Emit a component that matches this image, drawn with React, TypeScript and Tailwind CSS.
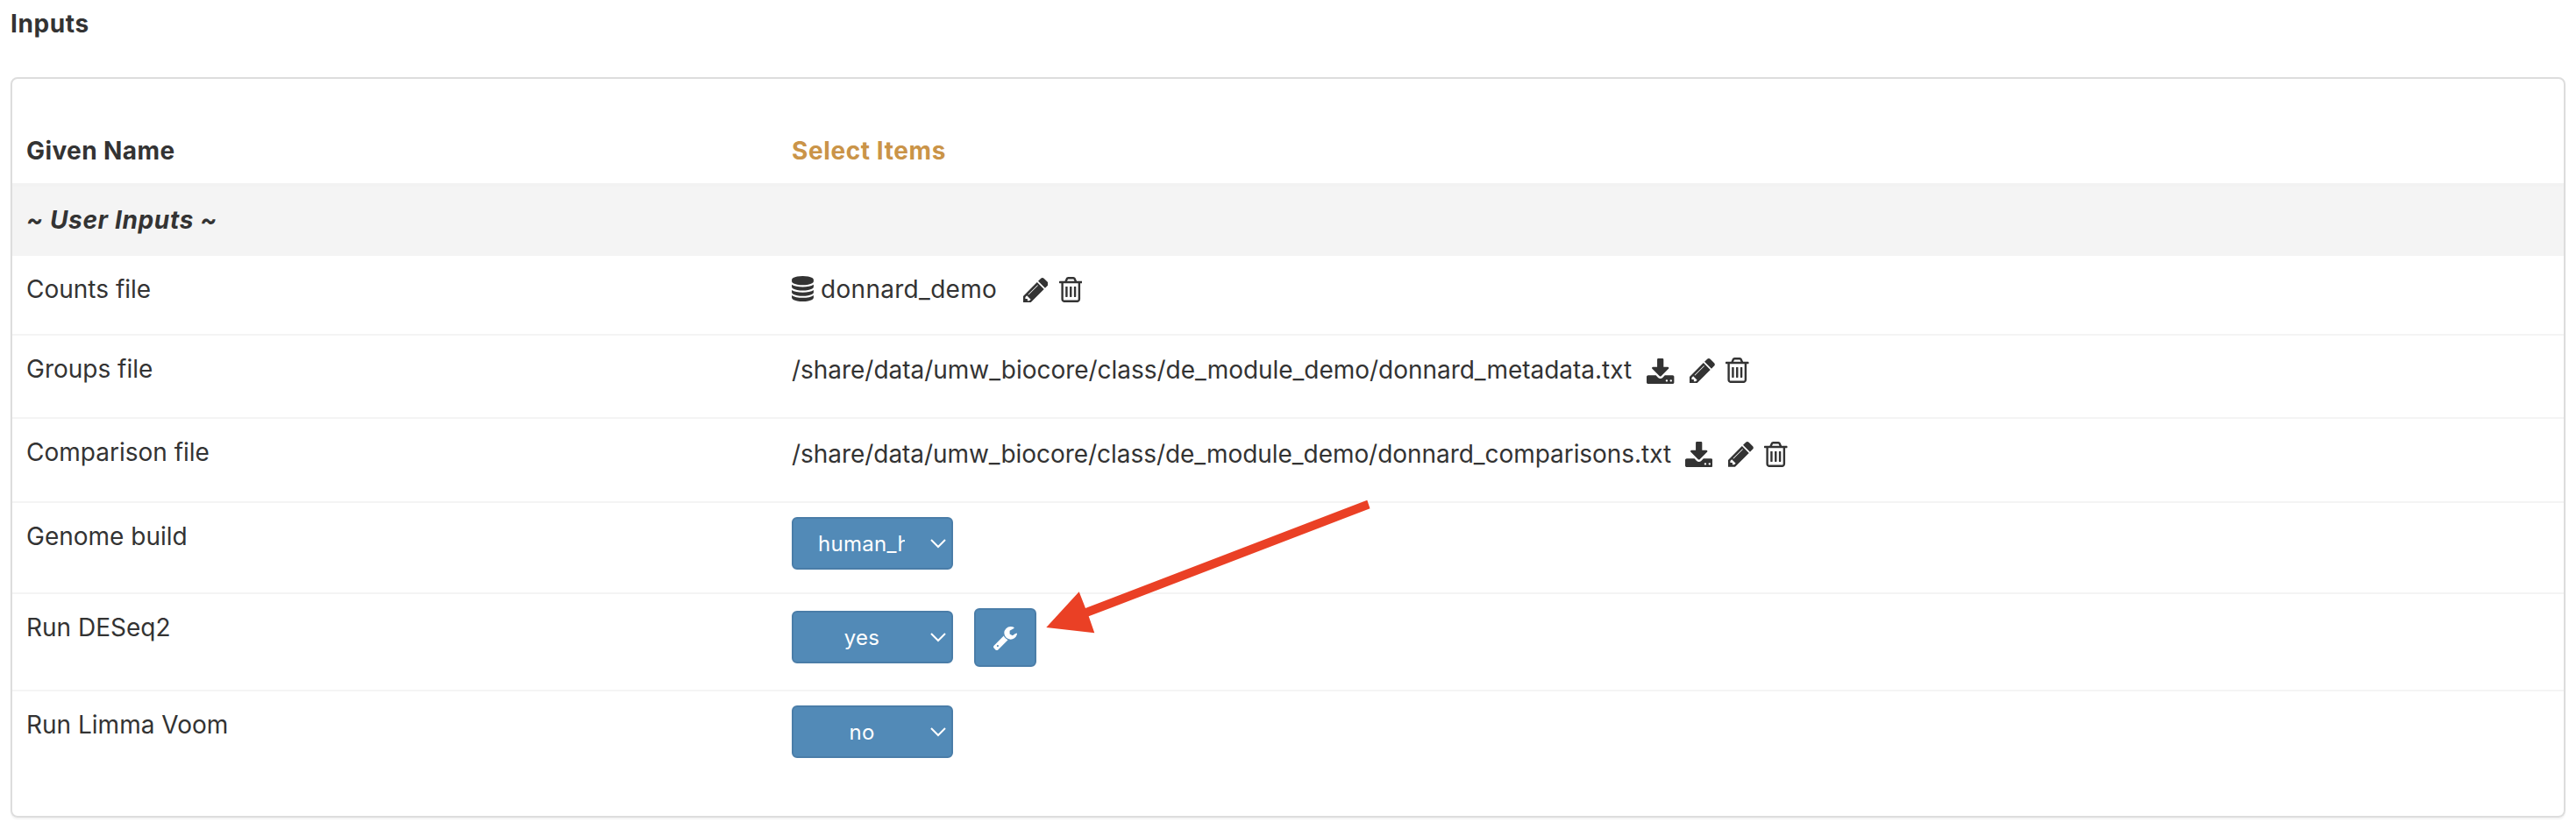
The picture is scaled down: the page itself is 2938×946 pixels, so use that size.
import type { ReactNode } from "react";

type GlyphProps = { className: string; viewBox: string; d: string };

function Glyph({ className, viewBox, d }: GlyphProps) {
  return (
    <svg className={`block shrink-0 fill-current ${className}`} viewBox={viewBox} aria-hidden="true">
      <path d={d} />
    </svg>
  );
}

const DatabaseIcon = () => (
  <Glyph
    className="mt-[5px] h-[29px] w-[25px]"
    viewBox="128 0 1536 1792"
    d="M896 768q237 0 443-43t325-127v170q0 69-103 128t-280 93.5-385 34.5-385-34.5-280-93.5-103-128v-170q119 84 325 127t443 43zm0 768q237 0 443-43t325-127v170q0 69-103 128t-280 93.5-385 34.5-385-34.5-280-93.5-103-128v-170q119 84 325 127t443 43zm0-384q237 0 443-43t325-127v170q0 69-103 128t-280 93.5-385 34.5-385-34.5-280-93.5-103-128v-170q119 84 325 127t443 43zm0-1152q208 0 385 34.5t280 93.5 103 128v128q0 69-103 128t-280 93.5-385 34.5-385-34.5-280-93.5-103-128v-128q0-69 103-128t280-93.5 385-34.5z"
  />
);

const DownloadIcon = () => (
  <Glyph
    className="mt-[6.5px] mr-[17.5px] h-[29px] w-[31.4px]"
    viewBox="64 0 1664 1536"
    d="M1344 1344q0-26-19-45t-45-19-45 19-19 45 19 45 45 19 45-19 19-45zm256 0q0-26-19-45t-45-19-45 19-19 45 19 45 45 19 45-19 19-45zm128-224v320q0 40-28 68t-68 28h-1472q-40 0-68-28t-28-68v-320q0-40 28-68t68-28h465l135 136q58 56 136 56t136-56l136-136h464q40 0 68 28t28 68zm-325-569q17 41-14 70l-448 448q-18 19-45 19t-45-19l-448-448q-31-29-14-70 17-39 59-39h256v-448q0-26 19-45t45-19h256q26 0 45 19t19 45v448h256q42 0 59 39z"
  />
);

const PencilIcon = () => (
  <Glyph
    className="mt-[6.5px] mr-[12.5px] h-[28.8px] w-[28.8px]"
    viewBox="128 149 1515 1515"
    d="M491 1536l91-91-235-235-91 91v107h128v128h107zm523-928q0-22-22-22-10 0-17 7l-542 542q-7 7-7 17 0 22 22 22 10 0 17-7l542-542q7-7 7-17zm-54-192l416 416-832 832h-416v-416zm683 96q0 53-37 90l-166 166-416-416 166-165q36-38 90-38 53 0 91 38l235 234q37 39 37 91z"
  />
);

const TrashIcon = () => (
  <Glyph
    className="mt-[6px] h-[29px] w-[26.5px]"
    viewBox="192 128 1408 1536"
    d="M704 736v576q0 14-9 23t-23 9h-64q-14 0-23-9t-9-23v-576q0-14 9-23t23-9h64q14 0 23 9t9 23zm256 0v576q0 14-9 23t-23 9h-64q-14 0-23-9t-9-23v-576q0-14 9-23t23-9h64q14 0 23 9t9 23zm256 0v576q0 14-9 23t-23 9h-64q-14 0-23-9t-9-23v-576q0-14 9-23t23-9h64q14 0 23 9t9 23zm128 724v-948h-896v948q0 22 7 40.5t14.5 27 10.5 8.5h832q3 0 10.5-8.5t14.5-27 7-40.5zm-672-1076h448l-48-117q-7-9-17-11h-317q-10 2-17 11zm928 32v64q0 14-9 23t-23 9h-96v948q0 83-47 143.5t-113 60.5h-832q-66 0-113-58.5t-47-141.5v-952h-96q-14 0-23-9t-9-23v-64q0-14 9-23t23-9h309l70-167q15-37 54-63t79-26h320q40 0 79 26t54 63l70 167h309q14 0 23 9t9 23z"
  />
);

const WrenchIcon = () => (
  <Glyph
    className="mt-[2px] h-[27px] w-[27px]"
    viewBox="85 128 1641 1643"
    d="M448 1472q0-26-19-45t-45-19-45 19-19 45 19 45 45 19 45-19 19-45zm644-420l-682 682q-37 37-90 37-52 0-91-37l-106-108q-38-36-38-90 0-53 38-91l681-681q39 98 114.5 173.5t173.5 114.5zm634-435q0 39-23 106-47 134-164.5 217.5t-258.5 83.5q-185 0-316.5-131.5t-131.5-316.5 131.5-316.5 316.5-131.5q58 0 121.5 16.5t107.5 46.5q16 11 16 28t-16 28l-293 169v224l193 107q5-3 79-48.5t135.5-81 70.5-35.5q15 0 23.5 10t8.5 25z"
  />
);

function SelectBox({ value, clipped = false }: { value: string; clipped?: boolean }) {
  return (
    <button
      type="button"
      className="flex h-[60px] w-[184px] shrink-0 items-center rounded-[6px] border-2 border-[#4a7da8] bg-[#528ab7] pt-px pl-[27px] text-2xl leading-[55px] text-white"
    >
      <span
        className={`block overflow-hidden whitespace-nowrap tracking-[0.3px] ${clipped ? "mr-[2px] ml-px w-[99px] text-left" : "w-[102px] text-center"}`}
      >
        {value}
      </span>
      <svg className="-mt-[2px] ml-[27px] block h-3 w-[18px]" viewBox="0 0 18 12" fill="none" stroke="white" strokeWidth="2" aria-hidden="true">
        <path d="M1 2l8 8 8-8" />
      </svg>
    </button>
  );
}

function Row({ label, className, children }: { label: string; className: string; children: ReactNode }) {
  return (
    <div className={`flex items-start pl-4 ${className}`}>
      <div className="w-[873px] shrink-0 pt-[18px]">{label}</div>
      {children}
    </div>
  );
}

export default function App() {
  return (
    <div className="relative h-[946px] w-[2938px] overflow-hidden bg-white px-3 pt-[7px] font-['Inter',sans-serif] text-[28px] leading-10 text-[#333]">
      <h1 className="font-bold tracking-[0.6px]">Inputs</h1>
      <section className="mt-[41px] h-[845px] w-[2914px] rounded-[8px] border-2 border-[#ddd] shadow-[0_2px_2px_rgba(0,0,0,0.05)]">
        <div className="flex h-[119px] pt-[62px] pl-4 font-bold">
          <div className="w-[873px] tracking-[0.4px]">Given Name</div>
          <div className="tracking-[0.6px] text-[#ca9448]">Select Items</div>
        </div>
        <div className="h-[83px] border-t-4 border-[#f2f2f2] bg-[#f4f4f4] pt-[18px] pl-4 font-bold tracking-[0.65px] italic">
          ~ User Inputs ~
        </div>
        <Row label="Counts file" className="h-[89px]">
          <div className="flex items-start pt-[18px]">
            <DatabaseIcon />
            <span className="mr-[29.5px] ml-2 tracking-[0.3px]">donnard_demo</span>
            <PencilIcon />
            <TrashIcon />
          </div>
        </Row>
        <Row label="Groups file" className="h-[95px] border-t-2 border-[#f4f4f4]">
          <div className="flex items-start pt-[19px]">
            <span className="mr-[17px] tracking-[-0.03px]">/share/data/umw_biocore/class/de_module_demo/donnard_metadata.txt</span>
            <DownloadIcon />
            <PencilIcon />
            <TrashIcon />
          </div>
        </Row>
        <Row label="Comparison file" className="h-24 border-t-2 border-[#f4f4f4]">
          <div className="flex items-start pt-[19.5px]">
            <span className="mr-4 tracking-[-0.05px]">/share/data/umw_biocore/class/de_module_demo/donnard_comparisons.txt</span>
            <DownloadIcon />
            <PencilIcon />
            <TrashIcon />
          </div>
        </Row>
        <Row label="Genome build" className="h-[104px] border-t-2 border-[#f4f4f4]">
          <div className="pt-4">
            <SelectBox value="human_hg38" clipped />
          </div>
        </Row>
        <Row label="Run DESeq2" className="h-[111px] border-t-2 border-[#f4f4f4]">
          <div className="flex items-start pt-4">
            <div className="mt-[3px] mr-6">
              <SelectBox value="yes" />
            </div>
            <button
              type="button"
              aria-label="Settings"
              className="flex h-[67px] w-[71px] items-center justify-center rounded-[6px] border-2 border-[#4a7da8] bg-[#528ab7] text-white"
            >
              <WrenchIcon />
            </button>
          </div>
        </Row>
        <Row label="Run Limma Voom" className="border-t-2 border-[#f4f4f4]">
          <div className="pt-4">
            <SelectBox value="no" />
          </div>
        </Row>
      </section>
      <svg
        className="pointer-events-none absolute top-[570px] left-[1193px] h-[154px] w-[371px] fill-[#ea4025]"
        viewBox="1193 570 371 154"
        aria-hidden="true"
      >
        <path d="M1193.3 716L1230.7 675.3L1238 694L1559.3 570.8L1562.5 580.3L1241.7 703.3L1248.3 722.3Z" />
      </svg>
    </div>
  );
}
